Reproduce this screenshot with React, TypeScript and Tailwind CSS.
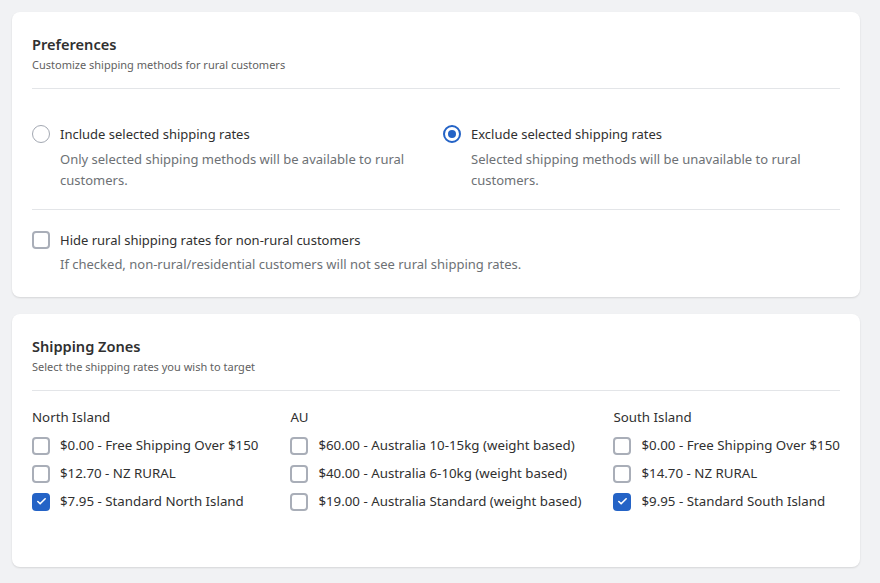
import { Check } from 'lucide-react';

type Rate = { label: string; checked?: boolean };

const zones: { name: string; rates: Rate[] }[] = [
  {
    name: 'North Island',
    rates: [
      { label: '$0.00 - Free Shipping Over $150' },
      { label: '$12.70 - NZ RURAL' },
      { label: '$7.95 - Standard North Island', checked: true },
    ],
  },
  {
    name: 'AU',
    rates: [
      { label: '$60.00 - Australia 10-15kg (weight based)' },
      { label: '$40.00 - Australia 6-10kg (weight based)' },
      { label: '$19.00 - Australia Standard (weight based)' },
    ],
  },
  {
    name: 'South Island',
    rates: [
      { label: '$0.00 - Free Shipping Over $150' },
      { label: '$14.70 - NZ RURAL' },
      { label: '$9.95 - Standard South Island', checked: true },
    ],
  },
];

function Box({ checked }: { checked?: boolean }) {
  if (checked)
    return (
      <span className="flex h-[18px] w-[18px] shrink-0 items-center justify-center rounded-[4px] bg-[#2463c6]">
        <Check className="h-[11px] w-[11px] text-white" strokeWidth={3.5} />
      </span>
    );
  return <span className="block h-[18px] w-[18px] shrink-0 rounded-[4px] border-2 border-[#a9aeb8] bg-white" />;
}

function Radio({ checked }: { checked?: boolean }) {
  if (checked)
    return (
      <span className="flex h-[18px] w-[18px] shrink-0 items-center justify-center rounded-full border-2 border-[#2463c6] bg-white">
        <span className="block h-2 w-2 rounded-full bg-[#2463c6]" />
      </span>
    );
  return <span className="block h-[18px] w-[18px] shrink-0 rounded-full border-[1.5px] border-[#a3a8b2] bg-white" />;
}

function CardHead({ title, sub }: { title: string; sub: string }) {
  return (
    <div className="border-b border-[#e3e5e8] pb-[15px]">
      <h2 className="text-[14.6px] font-semibold leading-5 text-[#303030]">{title}</h2>
      <p className="mt-[3px] text-[11px] leading-4 text-[#616161]">{sub}</p>
    </div>
  );
}

function Option({ control, label, desc, gap }: { control: JSX.Element; label: string; desc: string; gap: string }) {
  return (
    <div className="flex gap-[10px]">
      <div className="pt-[1px]">{control}</div>
      <div>
        <div className="text-[13px] leading-[21px] text-[#303030]">{label}</div>
        <div className={`${gap} text-[13px] leading-[21px] text-[#6d7175]`}>{desc}</div>
      </div>
    </div>
  );
}

export default function App() {
  return (
    <div
      className="flex min-h-[583px] flex-col gap-[17px] bg-[#f1f2f4] pb-3 pl-3 pr-5 pt-3"
      style={{ fontFamily: '"Noto Sans", "Open Sans", sans-serif' }}
    >
      <section className="rounded-lg bg-white px-5 pb-[22px] pt-[22px] shadow-[0_1px_2px_rgba(0,0,0,0.12)]">
        <CardHead title="Preferences" sub="Customize shipping methods for rural customers" />
        <div className="grid grid-cols-2 gap-[14px] border-b border-[#e3e5e8] pb-[18px] pt-[35px]">
          <Option
            control={<Radio />}
            gap="mt-[4px]"
            label="Include selected shipping rates"
            desc="Only selected shipping methods will be available to rural customers."
          />
          <Option
            control={<Radio checked />}
            gap="mt-[4px]"
            label="Exclude selected shipping rates"
            desc="Selected shipping methods will be unavailable to rural customers."
          />
        </div>
        <div className="pt-[20px]">
          <Option
            control={<Box />}
            gap="mt-[3px]"
            label="Hide rural shipping rates for non-rural customers"
            desc="If checked, non-rural/residential customers will not see rural shipping rates."
          />
        </div>
      </section>

      <section className="rounded-lg bg-white px-5 pb-[55px] pt-[22px] shadow-[0_1px_2px_rgba(0,0,0,0.12)]">
        <CardHead title="Shipping Zones" sub="Select the shipping rates you wish to target" />
        <div className="flex gap-8 pt-[16px]">
          {zones.map((z) => (
            <div key={z.name} className="whitespace-nowrap">
              <div className="text-[13.3px] leading-[21px] text-[#303030]">{z.name}</div>
              <div className="mt-[7px] flex flex-col gap-[7px]">
                {z.rates.map((r) => (
                  <label key={r.label} className="flex items-center gap-[10px] text-[13.3px] leading-[21px] text-[#303030]">
                    <Box checked={r.checked} />
                    {r.label}
                  </label>
                ))}
              </div>
            </div>
          ))}
        </div>
      </section>
    </div>
  );
}
